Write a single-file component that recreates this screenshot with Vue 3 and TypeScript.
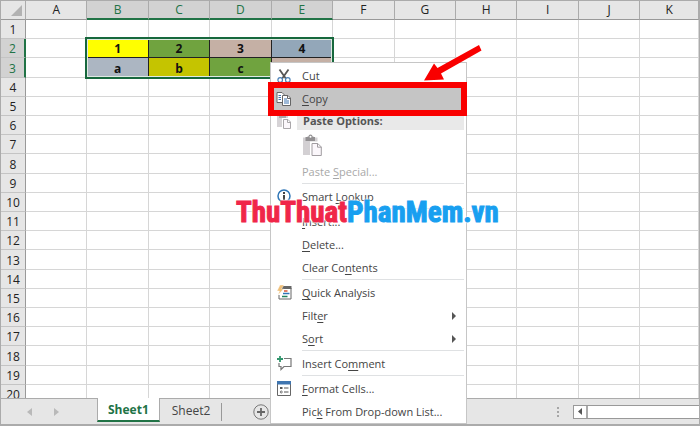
<script setup lang="ts">
import { ref } from 'vue'

interface MenuEntry {
  kind: 'item' | 'heading' | 'separator' | 'paste'
  text?: [string, string, string]
  icon?: string
  disabled?: boolean
  submenu?: boolean
}

const columns = ['A', 'B', 'C', 'D', 'E', 'F', 'G', 'H', 'I', 'J', 'K']
const rowCount = 20

const cells: Record<string, { value: string; fill: string }> = {
  B2: { value: '1', fill: 'yellow' },
  C2: { value: '2', fill: 'green' },
  D2: { value: '3', fill: 'tan' },
  E2: { value: '4', fill: 'blue' },
  B3: { value: 'a', fill: 'gray' },
  C3: { value: 'b', fill: 'olive' },
  D3: { value: 'c', fill: 'green' },
  E3: { value: '', fill: 'tan' },
}

const menu: MenuEntry[] = [
  { kind: 'item', text: ['Cu', 't', ''], icon: 'cut' },
  { kind: 'item', text: ['', 'C', 'opy'], icon: 'copy' },
  { kind: 'heading', text: ['Paste Options:', '', ''], icon: 'paste' },
  { kind: 'paste' },
  { kind: 'item', text: ['Paste ', 'S', 'pecial...'], disabled: true },
  { kind: 'separator' },
  { kind: 'item', text: ['Smart ', 'L', 'ookup'], icon: 'lookup' },
  { kind: 'separator' },
  { kind: 'item', text: ['', 'I', 'nsert...'] },
  { kind: 'item', text: ['', 'D', 'elete...'] },
  { kind: 'item', text: ['Clear Co', 'n', 'tents'] },
  { kind: 'separator' },
  { kind: 'item', text: ['', 'Q', 'uick Analysis'], icon: 'analysis' },
  { kind: 'item', text: ['Filt', 'e', 'r'], submenu: true },
  { kind: 'item', text: ['S', 'o', 'rt'], submenu: true },
  { kind: 'separator' },
  { kind: 'item', text: ['Insert Co', 'm', 'ment'], icon: 'comment' },
  { kind: 'separator' },
  { kind: 'item', text: ['', 'F', 'ormat Cells...'], icon: 'format' },
  { kind: 'item', text: ['Pic', 'k', ' From Drop-down List...'] },
]

const sheets = ['Sheet1', 'Sheet2']
const activeSheet = ref('Sheet1')
const activeItem = ref('copy')

function inSelection(column: string, row: number): boolean {
  return `${column}${row}` in cells
}
</script>

<template>
  <main class="window">
    <div class="sheet">
      <table class="grid">
        <colgroup>
          <col class="col-head" />
          <col v-for="c in columns" :key="c" :class="{ col: c !== 'K' }" />
        </colgroup>
        <thead>
          <tr>
            <th class="corner">
              <svg width="11" height="11" viewBox="0 0 11 11" aria-hidden="true"><path d="M11 0V11H0Z" fill="#b2b2b2" /></svg>
            </th>
            <th v-for="c in columns" :key="c" scope="col" :class="{ picked: inSelection(c, 2) }">{{ c }}</th>
          </tr>
        </thead>
        <tbody>
          <tr v-for="r in rowCount" :key="r">
            <th scope="row" :class="{ picked: inSelection('B', r) }">{{ r }}</th>
            <td
              v-for="c in columns"
              :key="c"
              :class="[cells[c + r]?.fill, { filled: inSelection(c, r), anchor: c + r === 'B2' }]"
            >{{ cells[c + r]?.value }}</td>
          </tr>
        </tbody>
      </table>
    </div>

    <footer class="bar">
      <div class="arrows">
        <button type="button" aria-label="Previous sheet"><svg width="5" height="8" viewBox="0 0 5 8"><path d="M5 0V8L0 4Z" fill="#b9b9b9" /></svg></button>
        <button type="button" aria-label="Next sheet"><svg width="5" height="8" viewBox="0 0 5 8"><path d="M0 0V8L5 4Z" fill="#b9b9b9" /></svg></button>
      </div>
      <nav class="tabs">
        <button
          v-for="s in sheets"
          :key="s"
          type="button"
          class="tab"
          :class="{ active: s === activeSheet }"
          @click="activeSheet = s"
        >{{ s }}</button>
      </nav>
      <button type="button" class="add" aria-label="New sheet">
        <svg width="16" height="16" viewBox="0 0 16 16"><circle cx="8" cy="8" r="7.2" fill="none" stroke="#777" /><path d="M8 4V12M4 8H12" stroke="#666" stroke-width="1.8" /></svg>
      </button>
      <svg class="grip" width="2" height="10" viewBox="0 0 2 10" aria-hidden="true"><path d="M0 0h2v2H0zM0 4h2v2H0zM0 8h2v2H0z" fill="#a6a6a6" /></svg>
      <div class="scroll">
        <button type="button" aria-label="Scroll left"><svg width="4" height="7" viewBox="0 0 4 7"><path d="M4 0V7L0 3.5Z" fill="#555" /></svg></button>
        <span class="thumb"></span>
      </div>
    </footer>

    <div class="menu" role="menu">
      <template v-for="(m, i) in menu" :key="i">
        <div v-if="m.kind === 'separator'" class="separator" role="separator"></div>
        <div v-else-if="m.kind === 'paste'" class="paste-row">
          <button type="button" aria-label="Paste" disabled>
            <svg width="20" height="23" viewBox="0 0 20 23">
              <path d="M1 3.5H15.500V21H1Z" fill="#d3d0d3" />
              <path d="M3.500 3H5.500V2.500H6.500A2 2 0 0 1 10.500 2.500H11.500V3H13V7H3.500Z" fill="#929092" />
              <circle cx="8.500" cy="2.800" r="1" fill="#fff" />
              <path d="M9.500 9H16L19.500 12.500V22H9.500Z" fill="#fbf7fb" stroke="#fff" stroke-width="3" />
              <path d="M10 9.500H15.800L19.300 13V21.500H10ZM15.500 9.500V13.200H19.300" fill="#fbf7fb" stroke="#a19da1" />
            </svg>
          </button>
        </div>
        <component
          :is="m.kind === 'heading' ? 'div' : 'button'"
          v-else
          class="item"
          :class="[m.kind, { active: m.icon === activeItem }]"
          :type="m.kind === 'item' ? 'button' : undefined"
          :role="m.kind === 'item' ? 'menuitem' : undefined"
          :disabled="m.disabled || undefined"
        >
          <span class="icon">
            <svg v-if="m.icon === 'cut'" width="14" height="14" viewBox="0 0 14 14">
              <path d="M2.500 .5L8.800 9.500M11.500 .5L5.200 9.500" stroke="#555" stroke-width="1.800" fill="none" />
              <circle cx="3.200" cy="11" r="2.300" fill="none" stroke="#4d82b8" stroke-width="1.200" />
              <circle cx="10.800" cy="11" r="2.300" fill="none" stroke="#4d82b8" stroke-width="1.200" />
            </svg>
            <svg v-else-if="m.icon === 'copy'" width="16" height="14" viewBox="0 0 16 14">
              <path d="M1 .5H6L8 2.500V10.500H1Z" fill="#fff" stroke="#666" />
              <path d="M2.500 3.500H5M2.500 5.500H5M2.500 7.500H5" stroke="#3f75b0" />
              <path d="M6.500 3.500H12L14.500 6V13.500H6.500Z" fill="#fff" stroke="#666" />
              <path d="M11.500 3.500V6.500H14.500" fill="none" stroke="#666" />
              <path d="M8 7H11M8 9H13M8 11H13" stroke="#3f75b0" />
            </svg>
            <svg v-else-if="m.icon === 'paste'" width="16" height="15" viewBox="0 0 16 15">
              <path d="M1 2H12V13H1Z" fill="#d6d3d6" />
              <path d="M3 1H10V4H3Z" fill="#aaa7aa" />
              <path d="M6 4H16V15H6Z" fill="#fff" />
              <path d="M7.500 5.500H12L14.500 8V14.500H7.500ZM11.500 5.500V8.500H14.500" fill="#fbf7fb" stroke="#aaa7aa" />
            </svg>
            <svg v-else-if="m.icon === 'lookup'" width="14" height="15" viewBox="0 0 14 15">
              <circle cx="7" cy="7" r="6" fill="#fff" stroke="#2e75b6" stroke-width="1.500" />
              <path d="M6 3H8V5H6ZM6 6H8V11H6Z" fill="#444" />
            </svg>
            <svg v-else-if="m.icon === 'analysis'" width="15" height="15" viewBox="0 0 15 15">
              <path d="M3.500 3H14V14H2V10" fill="#fff" stroke="#666" />
              <path d="M5 1H14.500V4H5Z" fill="#666" />
              <path d="M7 6H10.500" stroke="#d65532" stroke-width="1.500" />
              <path d="M6 8.500H12.500" stroke="#2e75b6" stroke-width="1.500" />
              <path d="M5 11.500H10.500" stroke="#21835c" stroke-width="1.500" />
              <path d="M3 0H7L4.500 4H6.500L1 10L2.500 6H0Z" fill="#efbf78" stroke="#fff" stroke-width=".4" />
            </svg>
            <svg v-else-if="m.icon === 'comment'" width="15" height="15" viewBox="0 0 15 15">
              <path d="M7 2.500H14V10.500H7L4 13.500V10.500H2V7" fill="none" stroke="#777" stroke-width="1.200" />
              <path d="M3 0V6M0 3H6" stroke="#31966d" stroke-width="1.800" />
            </svg>
            <svg v-else-if="m.icon === 'format'" width="14" height="15" viewBox="0 0 14 15">
              <path d="M.5 .5H13.500V14.500H.5Z" fill="#fff" stroke="#666" />
              <path d="M0 0H14V3.500H0Z" fill="#3f75b0" />
              <path d="M3 6H5.500V8H3ZM7 6.500H11.500V7.500H7ZM7 10.500H11.500V11.500H7Z" fill="#555" />
              <circle cx="4.300" cy="11" r="1" fill="none" stroke="#555" stroke-width=".8" />
            </svg>
          </span>
          <span class="label">{{ m.text?.[0] }}<u>{{ m.text?.[1] }}</u>{{ m.text?.[2] }}</span>
          <svg v-if="m.submenu" class="more" width="4" height="8" viewBox="0 0 4 8"><path d="M0 0V8L4 4Z" fill="#555" /></svg>
        </component>
      </template>
    </div>

    <div class="callout"></div>
    <svg class="pointer" width="60" height="38" viewBox="0 0 60 38" aria-hidden="true">
      <path d="M1 36.500L11 19.500L14.500 24L56 1L58.500 6.500L18 29.500L21 35.500Z" fill="#f90000" />
    </svg>
    <div class="brand"><span class="brand-red">ThuThuat</span><span class="brand-blue">PhanMem.vn</span></div>
  </main>
</template>

<style>
body {
  margin: 0;
}
</style>

<style scoped>
.window {
  position: relative;
  display: flex;
  flex-direction: column;
  height: 100vh;
  box-sizing: border-box;
  border: 1px solid #ababab;
  border-bottom-width: 2px;
  overflow: hidden;
  background: #fff;
  font-family: "Open Sans", "Noto Sans", sans-serif;
  font-size: 12px;
  color: #444;
}
button {
  font: inherit;
  color: inherit;
  border: 0;
  padding: 0;
  margin: 0;
  background: none;
}
svg {
  display: block;
}
.sheet {
  flex: 1;
  min-height: 0;
  overflow: hidden;
}
.grid {
  width: 100%;
  table-layout: fixed;
  border-collapse: separate;
  border-spacing: 0;
}
.col-head {
  width: 25px;
}
.col {
  width: 8.8%;
}
th,
td {
  box-sizing: border-box;
  height: 19px;
  padding: 0;
  line-height: 16px;
  text-align: center;
  border-right: 1px solid #d6d6d6;
  border-bottom: 1px solid #d6d6d6;
}
tbody tr:nth-child(5n + 3) > * {
  height: 20px;
}
th {
  font-weight: 400;
  color: #222;
  background: #e6e6e6;
  border-color: #ababab;
}
thead th {
  border-bottom-color: #999;
}
tbody th {
  padding-top: 2px;
  border-right-color: #999;
  border-bottom-color: #c4c4c4;
}
th.picked {
  background: #d2d2d2;
  color: #217346;
}
thead th.picked {
  border-bottom: 2px solid #217346;
}
tbody th.picked {
  border-right: 2px solid #217346;
}
.corner svg {
  margin: 0 3px 0 auto;
}
td.filled {
  padding-top: 2px;
  font-weight: 700;
  color: #111;
  border-color: #222;
}
.yellow { background: #ffff00; }
.green { background: #70a33f; }
.tan { background: #c5b0a5; }
.blue { background: #93a7b9; }
.gray { background: #acb6c2; }
.olive { background: #c5c400; }
.anchor {
  position: relative;
}
.anchor::after {
  content: "";
  position: absolute;
  top: -2px;
  left: -2px;
  box-sizing: border-box;
  width: calc(400% + 7px);
  height: calc(200% + 6px);
  border: 2px solid #17683d;
  box-shadow: inset 0 0 0 1px #dfe9e2;
}

.bar {
  display: flex;
  align-items: center;
  height: 26px;
  box-sizing: border-box;
  border-top: 1px solid #ababab;
  background: #e6e6e6;
}
.arrows {
  display: flex;
  gap: 22px;
  width: 70px;
  padding-left: 26px;
}
.tabs {
  display: flex;
  align-self: stretch;
}
.tab {
  height: 23px;
  padding: 0 12px;
}
.tab.active {
  margin-top: -1px;
  height: 24px;
  padding: 0 10px;
  border: solid #ababab;
  border-width: 0 1px;
  border-bottom: 2px solid #217346;
  background: #fff;
  color: #217346;
  font-weight: 700;
}
.tab:last-child {
  position: relative;
}
.tab:last-child::after {
  content: "";
  position: absolute;
  right: 0;
  top: 4px;
  bottom: 1px;
  border-right: 1px solid #999;
}
.add {
  margin-left: 31px;
}
.grip {
  margin-left: auto;
  margin-right: 14px;
}
.scroll {
  display: flex;
  width: 18%;
  height: 14px;
  box-sizing: border-box;
  border: 1px solid #999;
  border-right: 0;
  background: #fff;
}
.scroll button {
  width: 14px;
  padding-left: 4px;
  border-right: 2px solid #ababab;
}
.thumb {
  flex: 1;
}

.menu {
  position: absolute;
  left: 269px;
  top: 61px;
  width: 197px;
  box-sizing: border-box;
  padding: 1px 2px 0 1px;
  border: 1px solid #c6c6c6;
  background: #fff;
  font-size: 11px;
}
.item {
  display: flex;
  align-items: center;
  width: 100%;
  height: 23px;
  text-align: left;
  white-space: pre;
}
.item.active {
  background: #c5c5c5;
}
.item:disabled {
  color: #a8a8a8;
}
.icon {
  display: flex;
  flex: none;
  justify-content: center;
  width: 24px;
}
.label {
  flex: 1;
  padding-left: 6px;
  line-height: 18px;
}
.label u {
  text-underline-offset: 2px;
}
.heading {
  height: 22px;
  font-weight: 700;
  color: #555;
}
.heading .label {
  margin-left: 1px;
  background: #e9e9e9;
}
.more {
  margin-right: 8px;
}
.separator {
  height: 1px;
  margin: 0 0 1px 30px;
  background: #dfe1e3;
}
.paste-row {
  height: 28px;
  padding: 2px 0 0 30px;
  box-sizing: border-box;
}

.callout {
  position: absolute;
  left: 267px;
  top: 81px;
  width: 199px;
  height: 34px;
  box-sizing: border-box;
  border: 6px solid #f90000;
}
.pointer {
  position: absolute;
  left: 422px;
  top: 43px;
}
.brand {
  position: absolute;
  left: 235px;
  top: 193px;
  font: 700 29px/36px "Liberation Sans Narrow", "Roboto Condensed", "Roboto", sans-serif;
  white-space: nowrap;
  -webkit-text-stroke: 1px currentColor;
  text-shadow: 0 0 2px #fff, 0 0 2px #fff, 0 0 3px #fff, 0 0 3px #fff;
}
.brand-red {
  color: #f02649;
}
.brand-blue {
  color: #189ff0;
}
</style>
